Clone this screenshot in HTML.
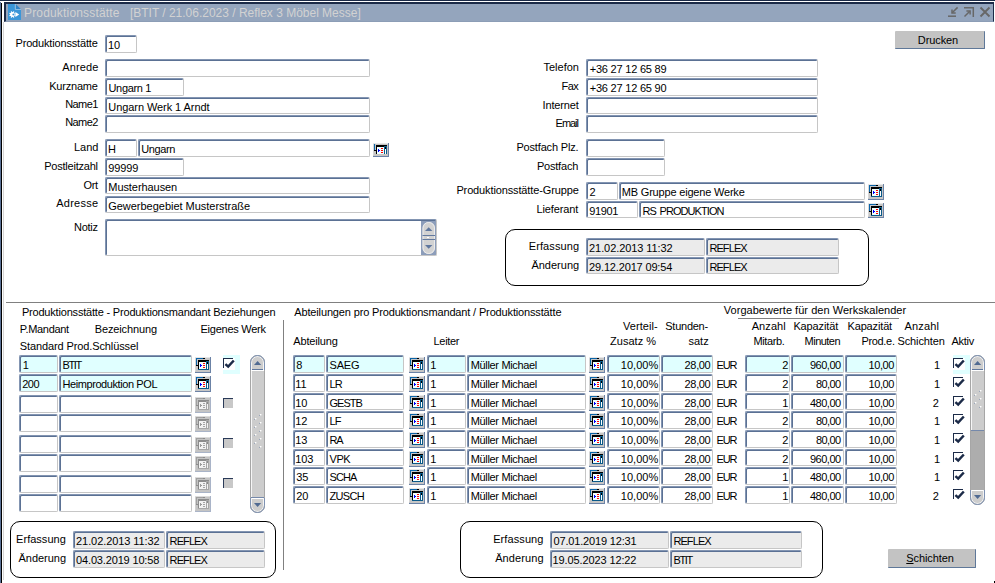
<!DOCTYPE html>
<html lang="de"><head><meta charset="utf-8"><title>Produktionsstätte</title>
<style>
html,body{margin:0;padding:0;background:#fff;}
body{width:995px;height:583px;position:relative;overflow:hidden;font-family:"Liberation Sans",Arial,sans-serif;font-size:11px;color:#000;}
.a{position:absolute}
#tb{position:absolute;left:4px;top:2px;width:990px;height:20px;background:#94a5bd;border-top:2px solid #1c2b48;border-left:2px solid #1c2b48;border-right:1px solid #1c2b48;border-bottom:1px solid #8c9db6;box-sizing:border-box}
#title{position:absolute;left:24px;top:4px;height:17px;line-height:18px;font-size:12px;color:#d2d2d2;white-space:pre;letter-spacing:0.1px}
.l{position:absolute;white-space:pre;line-height:12px;height:12px}
.f{position:absolute;box-sizing:border-box;background:#fff;border-style:solid;border-width:1px;border-color:#8395b2 #c6c6c6 #c6c6c6 #8395b2;box-shadow:inset 1px 1px 0 #5b7194;border-radius:2px;white-space:pre;overflow:hidden}
.f span{position:absolute;top:3px;line-height:13px}
.f.ro{background:#ebebeb}
.f.cur{background:#e0ffff}
.rb{position:absolute;box-sizing:border-box;border:1px solid #000;border-radius:10px}
.btn{position:absolute;box-sizing:border-box;background:#c3c3c3;border-right:1px solid #5f7899;border-bottom:1px solid #5f7899;border-radius:1px;text-align:center;line-height:19px;font-size:11px;letter-spacing:-0.1px;padding-right:3px}
</style></head>
<body>
<div class="a" style="left:0;top:0;width:995px;height:1px;background:#1c2b48"></div>
<div class="a" style="left:0;top:2px;width:1px;height:581px;background:#5a7196"></div>
<div class="a" style="left:1px;top:3px;width:1px;height:580px;background:#000"></div>
<div class="a" style="left:3px;top:22px;width:1px;height:558px;background:#d4d4d4"></div>
<div class="a" style="left:994px;top:581px;width:1px;height:2px;background:#000"></div>
<div id="tb"></div>
<div id="title"><span style="letter-spacing:0.17px">Produktionsstätte</span>&nbsp;&nbsp;&nbsp;<span style="letter-spacing:-0.01px">[BTIT / 21.06.2023 / Reflex 3 Möbel Messe]</span></div>
<svg class="a" style="left:8px;top:4px" width="14" height="17" viewBox="0 0 14 17"><path d="M0 0 H7 V5.2 H13 V16 H0 Z" fill="#3a96d8"/><path d="M7.6 0 L13 5.2 H7.6 Z" fill="#2f84c8"/><path d="M7.3 0 V5.5 H13" fill="none" stroke="#9cc8ea" stroke-width="0.8"/><path d="M6.08 11.11 L7.74 11.80 M5.21 11.98 L5.90 13.64 M3.99 11.98 L3.30 13.64 M3.12 11.11 L1.46 11.80 M3.12 9.89 L1.46 9.20 M3.99 9.02 L3.30 7.36 M5.21 9.02 L5.90 7.36 M6.08 9.89 L7.74 9.20" stroke="#fff" stroke-width="1.2" fill="none"/><circle cx="4.6" cy="10.5" r="2.4" fill="#fff"/><circle cx="5.3" cy="10.5" r="0.9" fill="#3a96d8"/><rect x="6.7" y="7" width="0.8" height="7" fill="#3a96d8"/><path d="M7.4 8 L11.2 10.5 L7.4 13 Z" fill="#fff"/></svg>
<svg class="a" style="left:946px;top:5px" width="46" height="14" viewBox="0 0 46 14"><g stroke="#676767" stroke-width="1.5" fill="none"><path d="M2 11.2 H10"/><path d="M11.6 2.4 L6.2 7.8"/><path d="M6 4.4 V8 H9.7"/><path d="M18 2.8 H27.3 V12"/><path d="M18.5 11.5 L23.8 6.2"/><path d="M20.4 5.9 H24.1 V9.6"/><path d="M34.5 2.5 L43.5 11.5 M43.5 2.5 L34.5 11.5" stroke-width="1.9"/></g></svg>
<div class="l" style="left:15.5px;top:37px;letter-spacing:-0.17px">Produktionsstätte</div>
<div class="f" style="left:105px;top:35px;width:32px;height:18px;"><span style="left:1.9px;letter-spacing:-0.10px">10</span></div>
<div class="l" style="left:62.3px;top:61px;letter-spacing:0.10px">Anrede</div>
<div class="f" style="left:105px;top:59px;width:265px;height:18px;"></div>
<div class="l" style="left:49.2px;top:80px;letter-spacing:-0.20px">Kurzname</div>
<div class="f" style="left:105px;top:78px;width:79px;height:18px;"><span style="left:2.5px;letter-spacing:-0.33px">Ungarn 1</span></div>
<div class="l" style="left:65.3px;top:98px;letter-spacing:-0.62px">Name1</div>
<div class="f" style="left:105px;top:97px;width:265px;height:17px;"><span style="left:2.3px;letter-spacing:-0.07px">Ungarn Werk 1 Arndt</span></div>
<div class="l" style="left:65.3px;top:116px;letter-spacing:-0.62px">Name2</div>
<div class="f" style="left:105px;top:115px;width:265px;height:18px;"></div>
<div class="l" style="left:74.1px;top:141px;letter-spacing:-0.10px">Land</div>
<div class="f" style="left:105px;top:139px;width:32px;height:18px;"><span style="left:2.0px;letter-spacing:-0.10px">H</span></div>
<div class="f" style="left:138px;top:139px;width:232px;height:18px;"><span style="left:2.2px;letter-spacing:-0.36px">Ungarn</span></div>
<svg class="a" style="left:373px;top:143px" width="16" height="14" viewBox="0 0 16 14" shape-rendering="crispEdges"><rect x="0" y="0" width="16" height="14" fill="#6b82a6"/><rect x="0" y="0" width="15" height="13" fill="#c6c6c6"/><rect x="0" y="0" width="15" height="1" fill="#e6e6e6"/><rect x="0" y="1" width="1" height="11" fill="#d6d6d6"/><rect x="1" y="1" width="1" height="6" fill="#0a64a8"/><rect x="1" y="7" width="3" height="1" fill="#000"/><rect x="3" y="2" width="11" height="1" fill="#000"/><rect x="3" y="3" width="1" height="8" fill="#000"/><rect x="4" y="3" width="7" height="1" fill="#000"/><rect x="11" y="3" width="3" height="1" fill="#0a5a8a"/><rect x="4" y="4" width="7" height="7" fill="#f0ffff"/><rect x="5" y="6" width="1" height="3" fill="#00f"/><rect x="6" y="7" width="1" height="1" fill="#00f"/><rect x="8" y="5" width="2" height="1" fill="#f00"/><rect x="8" y="7" width="2" height="1" fill="#f00"/><rect x="8" y="9" width="2" height="1" fill="#f00"/><rect x="11" y="4" width="1" height="7" fill="#0a5a8a"/><rect x="12" y="4" width="1" height="2" fill="#000"/><rect x="12" y="6" width="1" height="5" fill="#fff"/><rect x="13" y="4" width="1" height="7" fill="#0a5a8a"/></svg>
<div class="l" style="left:44.2px;top:160px;letter-spacing:-0.22px">Postleitzahl</div>
<div class="f" style="left:105px;top:158px;width:79px;height:18px;"><span style="left:2.3px;letter-spacing:-0.15px">99999</span></div>
<div class="l" style="left:83.4px;top:179px;letter-spacing:-0.30px">Ort</div>
<div class="f" style="left:105px;top:177px;width:265px;height:17px;"><span style="left:2.3px;letter-spacing:-0.07px">Musterhausen</span></div>
<div class="l" style="left:56.2px;top:197px;letter-spacing:0.27px">Adresse</div>
<div class="f" style="left:105px;top:196px;width:265px;height:17px;"><span style="left:2.2px;letter-spacing:-0.02px">Gewerbegebiet Musterstraße</span></div>
<div class="l" style="left:74.1px;top:221px;letter-spacing:-0.32px">Notiz</div>
<div class="f" style="left:105px;top:219px;width:332px;height:37px;"></div>
<svg class="a" style="left:421px;top:221px" width="15" height="34" viewBox="0 0 15 34"><rect x="0" y="0" width="15" height="34" fill="#8c9dba"/><rect x="1.5" y="1" width="12.5" height="32" rx="6" fill="#d2d2d2"/><rect x="2" y="1.5" width="11.5" height="31" rx="5.5" fill="none" stroke="#f2f2f2" stroke-opacity="0.8"/><path d="M4 10 L7.7 6.2 L11.4 10 Z" fill="#5f779e"/><path d="M4 24 L7.7 27.8 L11.4 24 Z" fill="#5f779e"/><rect x="1.5" y="14" width="12.5" height="1" fill="#62799f"/><rect x="1.5" y="18" width="12.5" height="1" fill="#62799f"/><rect x="6" y="16" width="2" height="1" fill="#fff"/></svg>
<div class="l" style="left:543.5px;top:61px;letter-spacing:0.00px">Telefon</div>
<div class="f" style="left:586px;top:59px;width:232px;height:18px;"><span style="left:2.7px;letter-spacing:-0.21px">+36 27 12 65 89</span></div>
<div class="l" style="left:561.6px;top:80px;letter-spacing:-0.55px">Fax</div>
<div class="f" style="left:586px;top:78px;width:232px;height:18px;"><span style="left:2.7px;letter-spacing:-0.21px">+36 27 12 65 90</span></div>
<div class="l" style="left:542.5px;top:99px;letter-spacing:-0.14px">Internet</div>
<div class="f" style="left:586px;top:97px;width:232px;height:17px;"></div>
<div class="l" style="left:555.6px;top:117px;letter-spacing:-1.03px">Email</div>
<div class="f" style="left:586px;top:115px;width:232px;height:18px;"></div>
<div class="l" style="left:516.4px;top:141px;letter-spacing:-0.16px">Postfach Plz.</div>
<div class="f" style="left:586px;top:139px;width:79px;height:18px;"></div>
<div class="l" style="left:536.9px;top:160px;letter-spacing:-0.20px">Postfach</div>
<div class="f" style="left:586px;top:158px;width:79px;height:18px;"></div>
<div class="l" style="left:456.4px;top:184px;letter-spacing:-0.13px">Produktionsstätte-Gruppe</div>
<div class="f" style="left:586px;top:182px;width:32px;height:18px;"><span style="left:2.5px;letter-spacing:-0.10px">2</span></div>
<div class="f" style="left:619px;top:182px;width:246px;height:18px;"><span style="left:1.8px;letter-spacing:-0.19px">MB Gruppe eigene Werke</span></div>
<svg class="a" style="left:868px;top:184px" width="16" height="16" viewBox="0 0 16 16" shape-rendering="crispEdges"><rect x="0" y="0" width="16" height="16" fill="#6b82a6"/><rect x="0" y="0" width="15" height="15" fill="#c6c6c6"/><rect x="0" y="0" width="15" height="1" fill="#e6e6e6"/><rect x="0" y="1" width="1" height="13" fill="#d6d6d6"/><rect x="1" y="1" width="8" height="1" fill="#0a64a8"/><rect x="8" y="1" width="2" height="1" fill="#000"/><rect x="1" y="1" width="1" height="7" fill="#0a64a8"/><rect x="1" y="8" width="3" height="1" fill="#000"/><rect x="3" y="3" width="11" height="1" fill="#000"/><rect x="3" y="4" width="1" height="8" fill="#000"/><rect x="4" y="4" width="7" height="1" fill="#000"/><rect x="11" y="4" width="3" height="1" fill="#0a5a8a"/><rect x="4" y="5" width="7" height="7" fill="#f0ffff"/><rect x="5" y="7" width="1" height="3" fill="#00f"/><rect x="6" y="8" width="1" height="1" fill="#00f"/><rect x="8" y="6" width="2" height="1" fill="#f00"/><rect x="8" y="8" width="2" height="1" fill="#f00"/><rect x="8" y="10" width="2" height="1" fill="#f00"/><rect x="11" y="5" width="1" height="7" fill="#0a5a8a"/><rect x="12" y="5" width="1" height="2" fill="#000"/><rect x="12" y="7" width="1" height="5" fill="#fff"/><rect x="13" y="5" width="1" height="7" fill="#0a5a8a"/><rect x="3" y="12" width="11" height="1" fill="#0a5a8a"/></svg>
<div class="l" style="left:536.4px;top:203px;letter-spacing:-0.11px">Lieferant</div>
<div class="f" style="left:586px;top:201px;width:52px;height:17px;"><span style="left:2.2px;letter-spacing:-0.33px">91901</span></div>
<div class="f" style="left:639px;top:201px;width:226px;height:17px;"><span style="left:2.4px;letter-spacing:-0.92px;word-spacing:1.5px">RS PRODUKTION</span></div>
<svg class="a" style="left:868px;top:203px" width="16" height="15" viewBox="0 0 16 15" shape-rendering="crispEdges"><rect x="0" y="0" width="16" height="15" fill="#6b82a6"/><rect x="0" y="0" width="15" height="14" fill="#c6c6c6"/><rect x="0" y="0" width="15" height="1" fill="#e6e6e6"/><rect x="0" y="1" width="1" height="12" fill="#d6d6d6"/><rect x="1" y="1" width="8" height="1" fill="#0a64a8"/><rect x="8" y="1" width="2" height="1" fill="#000"/><rect x="1" y="1" width="1" height="7" fill="#0a64a8"/><rect x="1" y="8" width="3" height="1" fill="#000"/><rect x="3" y="3" width="11" height="1" fill="#000"/><rect x="3" y="4" width="1" height="8" fill="#000"/><rect x="4" y="4" width="7" height="1" fill="#000"/><rect x="11" y="4" width="3" height="1" fill="#0a5a8a"/><rect x="4" y="5" width="7" height="7" fill="#f0ffff"/><rect x="5" y="7" width="1" height="3" fill="#00f"/><rect x="6" y="8" width="1" height="1" fill="#00f"/><rect x="8" y="6" width="2" height="1" fill="#f00"/><rect x="8" y="8" width="2" height="1" fill="#f00"/><rect x="8" y="10" width="2" height="1" fill="#f00"/><rect x="11" y="5" width="1" height="7" fill="#0a5a8a"/><rect x="12" y="5" width="1" height="2" fill="#000"/><rect x="12" y="7" width="1" height="5" fill="#fff"/><rect x="13" y="5" width="1" height="7" fill="#0a5a8a"/><rect x="3" y="12" width="11" height="1" fill="#0a5a8a"/></svg>
<div class="rb" style="left:505px;top:229px;width:364px;height:57px"></div>
<div class="l" style="left:528.8px;top:240px;letter-spacing:0.09px">Erfassung</div>
<div class="f ro" style="left:586px;top:238px;width:119px;height:18px;"><span style="left:2.1px;letter-spacing:-0.09px">21.02.2013 11:32</span></div>
<div class="f ro" style="left:706px;top:238px;width:133px;height:18px;"><span style="left:2.4px;letter-spacing:-0.90px">REFLEX</span></div>
<div class="l" style="left:531.4px;top:259px;letter-spacing:0.01px">Änderung</div>
<div class="f ro" style="left:586px;top:257px;width:119px;height:17px;"><span style="left:2.1px;letter-spacing:-0.16px">29.12.2017 09:54</span></div>
<div class="f ro" style="left:706px;top:257px;width:133px;height:17px;"><span style="left:2.4px;letter-spacing:-0.90px">REFLEX</span></div>
<div class="btn" style="left:895px;top:31px;width:90px;height:18px">Drucken</div>
<div class="a" style="left:6px;top:302px;width:989px;height:1px;background:#808080"></div>
<div class="a" style="left:283px;top:320px;width:1px;height:250px;background:#808080"></div>
<div class="l" style="left:21.9px;top:306px;letter-spacing:-0.19px">Produktionsstätte - Produktionsmandant Beziehungen</div>
<div class="l" style="left:19.8px;top:323px;letter-spacing:-0.30px">P.Mandant</div>
<div class="l" style="left:94.7px;top:323px;letter-spacing:-0.12px">Bezeichnung</div>
<div class="l" style="left:200.5px;top:323px;letter-spacing:-0.25px">Eigenes Werk</div>
<div class="l" style="left:19.8px;top:340px;letter-spacing:-0.11px">Standard Prod.Schlüssel</div>
<div class="f cur" style="left:19px;top:355px;width:39px;height:18px;"><span style="left:2.7px;letter-spacing:-0.10px">1</span></div>
<div class="f cur" style="left:59px;top:355px;width:133px;height:18px;"><span style="left:2.4px;letter-spacing:-1.30px">BTIT</span></div>
<svg class="a" style="left:195px;top:357px" width="16" height="16" viewBox="0 0 16 16" shape-rendering="crispEdges"><rect x="0" y="0" width="16" height="16" fill="#6b82a6"/><rect x="0" y="0" width="15" height="15" fill="#c6c6c6"/><rect x="0" y="0" width="15" height="1" fill="#e6e6e6"/><rect x="0" y="1" width="1" height="13" fill="#d6d6d6"/><rect x="1" y="1" width="8" height="1" fill="#0a64a8"/><rect x="8" y="1" width="2" height="1" fill="#000"/><rect x="1" y="1" width="1" height="7" fill="#0a64a8"/><rect x="1" y="8" width="3" height="1" fill="#000"/><rect x="3" y="3" width="11" height="1" fill="#000"/><rect x="3" y="4" width="1" height="8" fill="#000"/><rect x="4" y="4" width="7" height="1" fill="#000"/><rect x="11" y="4" width="3" height="1" fill="#0a5a8a"/><rect x="4" y="5" width="7" height="7" fill="#f0ffff"/><rect x="5" y="7" width="1" height="3" fill="#00f"/><rect x="6" y="8" width="1" height="1" fill="#00f"/><rect x="8" y="6" width="2" height="1" fill="#f00"/><rect x="8" y="8" width="2" height="1" fill="#f00"/><rect x="8" y="10" width="2" height="1" fill="#f00"/><rect x="11" y="5" width="1" height="7" fill="#0a5a8a"/><rect x="12" y="5" width="1" height="2" fill="#000"/><rect x="12" y="7" width="1" height="5" fill="#fff"/><rect x="13" y="5" width="1" height="7" fill="#0a5a8a"/><rect x="3" y="12" width="11" height="1" fill="#0a5a8a"/></svg>
<div class="a" style="left:223px;top:355px;width:17px;height:19px;background:#e0ffff"></div>
<svg class="a" style="left:223px;top:358px" width="12" height="12" viewBox="0 0 12 12"><rect x="0" y="0" width="12" height="12" fill="#fff"/><rect x="0" y="0" width="10" height="1" fill="#1c2b48"/><rect x="0" y="0" width="1" height="10" fill="#1c2b48"/><path d="M2.4 6.1 L5.2 8.6 L10.8 2.5" fill="none" stroke="#1c2b48" stroke-width="2.5"/></svg>
<div class="f cur" style="left:19px;top:374px;width:39px;height:18px;"><span style="left:2.2px;letter-spacing:-0.45px">200</span></div>
<div class="f cur" style="left:59px;top:374px;width:133px;height:18px;"><span style="left:2.4px;letter-spacing:-0.41px">Heimproduktion POL</span></div>
<svg class="a" style="left:195px;top:376px" width="16" height="16" viewBox="0 0 16 16" shape-rendering="crispEdges"><rect x="0" y="0" width="16" height="16" fill="#6b82a6"/><rect x="0" y="0" width="15" height="15" fill="#c6c6c6"/><rect x="0" y="0" width="15" height="1" fill="#e6e6e6"/><rect x="0" y="1" width="1" height="13" fill="#d6d6d6"/><rect x="1" y="1" width="8" height="1" fill="#0a64a8"/><rect x="8" y="1" width="2" height="1" fill="#000"/><rect x="1" y="1" width="1" height="7" fill="#0a64a8"/><rect x="1" y="8" width="3" height="1" fill="#000"/><rect x="3" y="3" width="11" height="1" fill="#000"/><rect x="3" y="4" width="1" height="8" fill="#000"/><rect x="4" y="4" width="7" height="1" fill="#000"/><rect x="11" y="4" width="3" height="1" fill="#0a5a8a"/><rect x="4" y="5" width="7" height="7" fill="#f0ffff"/><rect x="5" y="7" width="1" height="3" fill="#00f"/><rect x="6" y="8" width="1" height="1" fill="#00f"/><rect x="8" y="6" width="2" height="1" fill="#f00"/><rect x="8" y="8" width="2" height="1" fill="#f00"/><rect x="8" y="10" width="2" height="1" fill="#f00"/><rect x="11" y="5" width="1" height="7" fill="#0a5a8a"/><rect x="12" y="5" width="1" height="2" fill="#000"/><rect x="12" y="7" width="1" height="5" fill="#fff"/><rect x="13" y="5" width="1" height="7" fill="#0a5a8a"/><rect x="3" y="12" width="11" height="1" fill="#0a5a8a"/></svg>
<div class="f" style="left:19px;top:395px;width:39px;height:18px;"></div>
<div class="f" style="left:59px;top:395px;width:133px;height:18px;"></div>
<svg class="a" style="left:195px;top:397px" width="16" height="16" viewBox="0 0 16 16" shape-rendering="crispEdges"><rect x="0" y="0" width="16" height="16" fill="#a9b4c8"/><rect x="0" y="0" width="15" height="15" fill="#c4c4c4"/><rect x="0" y="0" width="15" height="1" fill="#dcdcdc"/><rect x="0" y="1" width="1" height="13" fill="#d0d0d0"/><rect x="1" y="1" width="8" height="1" fill="#a0a0a0"/><rect x="8" y="1" width="2" height="1" fill="#8c8c8c"/><rect x="1" y="1" width="1" height="7" fill="#a0a0a0"/><rect x="1" y="8" width="3" height="1" fill="#8c8c8c"/><rect x="3" y="3" width="11" height="1" fill="#8c8c8c"/><rect x="3" y="4" width="1" height="8" fill="#8c8c8c"/><rect x="4" y="4" width="7" height="1" fill="#8c8c8c"/><rect x="11" y="4" width="3" height="1" fill="#a6a6a6"/><rect x="4" y="5" width="7" height="7" fill="#f2f2f2"/><rect x="5" y="7" width="1" height="3" fill="#9a9a9a"/><rect x="6" y="8" width="1" height="1" fill="#9a9a9a"/><rect x="8" y="6" width="2" height="1" fill="#a4a4a4"/><rect x="8" y="8" width="2" height="1" fill="#a4a4a4"/><rect x="8" y="10" width="2" height="1" fill="#a4a4a4"/><rect x="11" y="5" width="1" height="7" fill="#a6a6a6"/><rect x="12" y="5" width="1" height="2" fill="#8c8c8c"/><rect x="12" y="7" width="1" height="5" fill="#f2f2f2"/><rect x="13" y="5" width="1" height="7" fill="#a6a6a6"/><rect x="3" y="12" width="11" height="1" fill="#a6a6a6"/></svg>
<svg class="a" style="left:223px;top:398px" width="11" height="11" viewBox="0 0 11 11" shape-rendering="crispEdges"><rect x="0" y="0" width="11" height="11" fill="#fff"/><rect x="0" y="0" width="10" height="10" fill="#c8c8c8"/><rect x="0" y="0" width="10" height="1" fill="#2a3a58"/><rect x="0" y="0" width="1" height="10" fill="#2a3a58"/></svg>
<div class="f" style="left:19px;top:414px;width:39px;height:18px;"></div>
<div class="f" style="left:59px;top:414px;width:133px;height:18px;"></div>
<svg class="a" style="left:195px;top:416px" width="16" height="16" viewBox="0 0 16 16" shape-rendering="crispEdges"><rect x="0" y="0" width="16" height="16" fill="#a9b4c8"/><rect x="0" y="0" width="15" height="15" fill="#c4c4c4"/><rect x="0" y="0" width="15" height="1" fill="#dcdcdc"/><rect x="0" y="1" width="1" height="13" fill="#d0d0d0"/><rect x="1" y="1" width="8" height="1" fill="#a0a0a0"/><rect x="8" y="1" width="2" height="1" fill="#8c8c8c"/><rect x="1" y="1" width="1" height="7" fill="#a0a0a0"/><rect x="1" y="8" width="3" height="1" fill="#8c8c8c"/><rect x="3" y="3" width="11" height="1" fill="#8c8c8c"/><rect x="3" y="4" width="1" height="8" fill="#8c8c8c"/><rect x="4" y="4" width="7" height="1" fill="#8c8c8c"/><rect x="11" y="4" width="3" height="1" fill="#a6a6a6"/><rect x="4" y="5" width="7" height="7" fill="#f2f2f2"/><rect x="5" y="7" width="1" height="3" fill="#9a9a9a"/><rect x="6" y="8" width="1" height="1" fill="#9a9a9a"/><rect x="8" y="6" width="2" height="1" fill="#a4a4a4"/><rect x="8" y="8" width="2" height="1" fill="#a4a4a4"/><rect x="8" y="10" width="2" height="1" fill="#a4a4a4"/><rect x="11" y="5" width="1" height="7" fill="#a6a6a6"/><rect x="12" y="5" width="1" height="2" fill="#8c8c8c"/><rect x="12" y="7" width="1" height="5" fill="#f2f2f2"/><rect x="13" y="5" width="1" height="7" fill="#a6a6a6"/><rect x="3" y="12" width="11" height="1" fill="#a6a6a6"/></svg>
<div class="f" style="left:19px;top:435px;width:39px;height:18px;"></div>
<div class="f" style="left:59px;top:435px;width:133px;height:18px;"></div>
<svg class="a" style="left:195px;top:437px" width="16" height="16" viewBox="0 0 16 16" shape-rendering="crispEdges"><rect x="0" y="0" width="16" height="16" fill="#a9b4c8"/><rect x="0" y="0" width="15" height="15" fill="#c4c4c4"/><rect x="0" y="0" width="15" height="1" fill="#dcdcdc"/><rect x="0" y="1" width="1" height="13" fill="#d0d0d0"/><rect x="1" y="1" width="8" height="1" fill="#a0a0a0"/><rect x="8" y="1" width="2" height="1" fill="#8c8c8c"/><rect x="1" y="1" width="1" height="7" fill="#a0a0a0"/><rect x="1" y="8" width="3" height="1" fill="#8c8c8c"/><rect x="3" y="3" width="11" height="1" fill="#8c8c8c"/><rect x="3" y="4" width="1" height="8" fill="#8c8c8c"/><rect x="4" y="4" width="7" height="1" fill="#8c8c8c"/><rect x="11" y="4" width="3" height="1" fill="#a6a6a6"/><rect x="4" y="5" width="7" height="7" fill="#f2f2f2"/><rect x="5" y="7" width="1" height="3" fill="#9a9a9a"/><rect x="6" y="8" width="1" height="1" fill="#9a9a9a"/><rect x="8" y="6" width="2" height="1" fill="#a4a4a4"/><rect x="8" y="8" width="2" height="1" fill="#a4a4a4"/><rect x="8" y="10" width="2" height="1" fill="#a4a4a4"/><rect x="11" y="5" width="1" height="7" fill="#a6a6a6"/><rect x="12" y="5" width="1" height="2" fill="#8c8c8c"/><rect x="12" y="7" width="1" height="5" fill="#f2f2f2"/><rect x="13" y="5" width="1" height="7" fill="#a6a6a6"/><rect x="3" y="12" width="11" height="1" fill="#a6a6a6"/></svg>
<svg class="a" style="left:223px;top:438px" width="11" height="11" viewBox="0 0 11 11" shape-rendering="crispEdges"><rect x="0" y="0" width="11" height="11" fill="#fff"/><rect x="0" y="0" width="10" height="10" fill="#c8c8c8"/><rect x="0" y="0" width="10" height="1" fill="#2a3a58"/><rect x="0" y="0" width="1" height="10" fill="#2a3a58"/></svg>
<div class="f" style="left:19px;top:454px;width:39px;height:18px;"></div>
<div class="f" style="left:59px;top:454px;width:133px;height:18px;"></div>
<svg class="a" style="left:195px;top:456px" width="16" height="16" viewBox="0 0 16 16" shape-rendering="crispEdges"><rect x="0" y="0" width="16" height="16" fill="#a9b4c8"/><rect x="0" y="0" width="15" height="15" fill="#c4c4c4"/><rect x="0" y="0" width="15" height="1" fill="#dcdcdc"/><rect x="0" y="1" width="1" height="13" fill="#d0d0d0"/><rect x="1" y="1" width="8" height="1" fill="#a0a0a0"/><rect x="8" y="1" width="2" height="1" fill="#8c8c8c"/><rect x="1" y="1" width="1" height="7" fill="#a0a0a0"/><rect x="1" y="8" width="3" height="1" fill="#8c8c8c"/><rect x="3" y="3" width="11" height="1" fill="#8c8c8c"/><rect x="3" y="4" width="1" height="8" fill="#8c8c8c"/><rect x="4" y="4" width="7" height="1" fill="#8c8c8c"/><rect x="11" y="4" width="3" height="1" fill="#a6a6a6"/><rect x="4" y="5" width="7" height="7" fill="#f2f2f2"/><rect x="5" y="7" width="1" height="3" fill="#9a9a9a"/><rect x="6" y="8" width="1" height="1" fill="#9a9a9a"/><rect x="8" y="6" width="2" height="1" fill="#a4a4a4"/><rect x="8" y="8" width="2" height="1" fill="#a4a4a4"/><rect x="8" y="10" width="2" height="1" fill="#a4a4a4"/><rect x="11" y="5" width="1" height="7" fill="#a6a6a6"/><rect x="12" y="5" width="1" height="2" fill="#8c8c8c"/><rect x="12" y="7" width="1" height="5" fill="#f2f2f2"/><rect x="13" y="5" width="1" height="7" fill="#a6a6a6"/><rect x="3" y="12" width="11" height="1" fill="#a6a6a6"/></svg>
<div class="f" style="left:19px;top:475px;width:39px;height:18px;"></div>
<div class="f" style="left:59px;top:475px;width:133px;height:18px;"></div>
<svg class="a" style="left:195px;top:477px" width="16" height="16" viewBox="0 0 16 16" shape-rendering="crispEdges"><rect x="0" y="0" width="16" height="16" fill="#a9b4c8"/><rect x="0" y="0" width="15" height="15" fill="#c4c4c4"/><rect x="0" y="0" width="15" height="1" fill="#dcdcdc"/><rect x="0" y="1" width="1" height="13" fill="#d0d0d0"/><rect x="1" y="1" width="8" height="1" fill="#a0a0a0"/><rect x="8" y="1" width="2" height="1" fill="#8c8c8c"/><rect x="1" y="1" width="1" height="7" fill="#a0a0a0"/><rect x="1" y="8" width="3" height="1" fill="#8c8c8c"/><rect x="3" y="3" width="11" height="1" fill="#8c8c8c"/><rect x="3" y="4" width="1" height="8" fill="#8c8c8c"/><rect x="4" y="4" width="7" height="1" fill="#8c8c8c"/><rect x="11" y="4" width="3" height="1" fill="#a6a6a6"/><rect x="4" y="5" width="7" height="7" fill="#f2f2f2"/><rect x="5" y="7" width="1" height="3" fill="#9a9a9a"/><rect x="6" y="8" width="1" height="1" fill="#9a9a9a"/><rect x="8" y="6" width="2" height="1" fill="#a4a4a4"/><rect x="8" y="8" width="2" height="1" fill="#a4a4a4"/><rect x="8" y="10" width="2" height="1" fill="#a4a4a4"/><rect x="11" y="5" width="1" height="7" fill="#a6a6a6"/><rect x="12" y="5" width="1" height="2" fill="#8c8c8c"/><rect x="12" y="7" width="1" height="5" fill="#f2f2f2"/><rect x="13" y="5" width="1" height="7" fill="#a6a6a6"/><rect x="3" y="12" width="11" height="1" fill="#a6a6a6"/></svg>
<svg class="a" style="left:223px;top:478px" width="11" height="11" viewBox="0 0 11 11" shape-rendering="crispEdges"><rect x="0" y="0" width="11" height="11" fill="#fff"/><rect x="0" y="0" width="10" height="10" fill="#c8c8c8"/><rect x="0" y="0" width="10" height="1" fill="#2a3a58"/><rect x="0" y="0" width="1" height="10" fill="#2a3a58"/></svg>
<div class="f" style="left:19px;top:494px;width:39px;height:18px;"></div>
<div class="f" style="left:59px;top:494px;width:133px;height:18px;"></div>
<svg class="a" style="left:195px;top:496px" width="16" height="16" viewBox="0 0 16 16" shape-rendering="crispEdges"><rect x="0" y="0" width="16" height="16" fill="#a9b4c8"/><rect x="0" y="0" width="15" height="15" fill="#c4c4c4"/><rect x="0" y="0" width="15" height="1" fill="#dcdcdc"/><rect x="0" y="1" width="1" height="13" fill="#d0d0d0"/><rect x="1" y="1" width="8" height="1" fill="#a0a0a0"/><rect x="8" y="1" width="2" height="1" fill="#8c8c8c"/><rect x="1" y="1" width="1" height="7" fill="#a0a0a0"/><rect x="1" y="8" width="3" height="1" fill="#8c8c8c"/><rect x="3" y="3" width="11" height="1" fill="#8c8c8c"/><rect x="3" y="4" width="1" height="8" fill="#8c8c8c"/><rect x="4" y="4" width="7" height="1" fill="#8c8c8c"/><rect x="11" y="4" width="3" height="1" fill="#a6a6a6"/><rect x="4" y="5" width="7" height="7" fill="#f2f2f2"/><rect x="5" y="7" width="1" height="3" fill="#9a9a9a"/><rect x="6" y="8" width="1" height="1" fill="#9a9a9a"/><rect x="8" y="6" width="2" height="1" fill="#a4a4a4"/><rect x="8" y="8" width="2" height="1" fill="#a4a4a4"/><rect x="8" y="10" width="2" height="1" fill="#a4a4a4"/><rect x="11" y="5" width="1" height="7" fill="#a6a6a6"/><rect x="12" y="5" width="1" height="2" fill="#8c8c8c"/><rect x="12" y="7" width="1" height="5" fill="#f2f2f2"/><rect x="13" y="5" width="1" height="7" fill="#a6a6a6"/><rect x="3" y="12" width="11" height="1" fill="#a6a6a6"/></svg>
<svg class="a" style="left:250px;top:355px" width="15" height="158" viewBox="0 0 15 158"><clipPath id="sbc1"><rect x="0" y="0" width="15" height="158" rx="7.5" ry="7.5"/></clipPath><clipPath id="sbc1e"><rect x="0" y="0" width="15" height="15"/><rect x="0" y="143" width="15" height="15"/></clipPath><g clip-path="url(#sbc1)"><rect x="0" y="0" width="15" height="158" fill="#cdcdcd"/><rect x="1" y="16" width="1" height="126" fill="#f6f6f6"/><rect x="0" y="142" width="15" height="1" fill="#7589ab"/><rect x="1" y="143" width="13" height="1" fill="#fff"/><rect x="0" y="14" width="15" height="1" fill="#5f779e"/><rect x="1" y="15" width="13" height="1" fill="#fff"/></g><rect x="0.5" y="0.5" width="14" height="157" rx="7" ry="7" fill="none" stroke="#a6a6a6"/><g clip-path="url(#sbc1e)"><rect x="1.5" y="1.5" width="12" height="155" rx="6" ry="6" fill="none" stroke="#f4f4f4"/><rect x="0.5" y="0.5" width="14" height="157" rx="7" ry="7" fill="none" stroke="#7e92b3"/></g><path d="M4 10 L7.6 6 L11.2 10 Z" fill="#506a92"/><path d="M4 148 L7.6 152 L11.2 148 Z" fill="#506a92"/><rect x="10" y="59" width="1.4" height="1.4" fill="#fff"/><rect x="9" y="60" width="1" height="1" fill="#9aa6ba"/><rect x="5" y="63" width="1.4" height="1.4" fill="#fff"/><rect x="4" y="64" width="1" height="1" fill="#9aa6ba"/><rect x="10" y="67" width="1.4" height="1.4" fill="#fff"/><rect x="9" y="68" width="1" height="1" fill="#9aa6ba"/><rect x="5" y="71" width="1.4" height="1.4" fill="#fff"/><rect x="4" y="72" width="1" height="1" fill="#9aa6ba"/><rect x="10" y="75" width="1.4" height="1.4" fill="#fff"/><rect x="9" y="76" width="1" height="1" fill="#9aa6ba"/><rect x="5" y="79" width="1.4" height="1.4" fill="#fff"/><rect x="4" y="80" width="1" height="1" fill="#9aa6ba"/><rect x="10" y="83" width="1.4" height="1.4" fill="#fff"/><rect x="9" y="84" width="1" height="1" fill="#9aa6ba"/><rect x="5" y="87" width="1.4" height="1.4" fill="#fff"/><rect x="4" y="88" width="1" height="1" fill="#9aa6ba"/><rect x="10" y="91" width="1.4" height="1.4" fill="#fff"/><rect x="9" y="92" width="1" height="1" fill="#9aa6ba"/></svg>
<div class="rb" style="left:10px;top:521px;width:266px;height:57px"></div>
<div class="l" style="left:16.1px;top:533px;letter-spacing:0.02px">Erfassung</div>
<div class="f ro" style="left:73px;top:531px;width:92px;height:18px;"><span style="left:2.1px;letter-spacing:-0.09px">21.02.2013 11:32</span></div>
<div class="f ro" style="left:166px;top:531px;width:99px;height:18px;"><span style="left:2.6px;letter-spacing:-0.90px">REFLEX</span></div>
<div class="l" style="left:18.5px;top:552px;letter-spacing:-0.03px">Änderung</div>
<div class="f ro" style="left:73px;top:550px;width:92px;height:18px;"><span style="left:2.1px;letter-spacing:-0.16px">04.03.2019 10:58</span></div>
<div class="f ro" style="left:166px;top:550px;width:99px;height:18px;"><span style="left:2.6px;letter-spacing:-0.90px">REFLEX</span></div>
<div class="l" style="left:294.3px;top:306px;letter-spacing:-0.15px">Abteilungen pro Produktionsmandant / Produktionsstätte</div>
<div class="l" style="left:723.8px;top:304px;letter-spacing:0.03px">Vorgabewerte für den Werkskalender</div>
<div class="a" style="left:738px;top:318px;width:161px;height:1px;background:#808080"></div>
<div class="l" style="left:293.3px;top:335px;letter-spacing:-0.16px">Abteilung</div>
<div class="l" style="left:433.6px;top:335px;letter-spacing:-0.34px">Leiter</div>
<div class="l" style="left:623.1px;top:320px;letter-spacing:0.03px">Verteil-</div>
<div class="l" style="left:610.0px;top:335px;letter-spacing:0.04px">Zusatz %</div>
<div class="l" style="left:665.3px;top:320px;letter-spacing:-0.26px">Stunden-</div>
<div class="l" style="left:688.4px;top:335px;letter-spacing:0.03px">satz</div>
<div class="l" style="left:751.7px;top:320px;letter-spacing:0.08px">Anzahl</div>
<div class="l" style="left:753.5px;top:335px;letter-spacing:-0.38px">Mitarb.</div>
<div class="l" style="left:793.4px;top:320px;letter-spacing:-0.12px">Kapazität</div>
<div class="l" style="left:804.6px;top:335px;letter-spacing:-0.53px">Minuten</div>
<div class="l" style="left:847.5px;top:320px;letter-spacing:-0.15px">Kapazität</div>
<div class="l" style="left:861.4px;top:335px;letter-spacing:-0.32px">Prod.e.</div>
<div class="l" style="left:904.4px;top:320px;letter-spacing:0.18px">Anzahl</div>
<div class="l" style="left:897.5px;top:335px;letter-spacing:-0.12px">Schichten</div>
<div class="l" style="left:951.4px;top:335px;letter-spacing:-0.22px">Aktiv</div>
<div class="f cur" style="left:293px;top:355px;width:32px;height:18px;"><span style="left:2.2px;letter-spacing:-0.10px">8</span></div>
<div class="f cur" style="left:326px;top:355px;width:78px;height:18px;"><span style="left:2.6px;letter-spacing:-0.23px">SAEG</span></div>
<svg class="a" style="left:409px;top:357px" width="16" height="16" viewBox="0 0 16 16" shape-rendering="crispEdges"><rect x="0" y="0" width="16" height="16" fill="#6b82a6"/><rect x="0" y="0" width="15" height="15" fill="#c6c6c6"/><rect x="0" y="0" width="15" height="1" fill="#e6e6e6"/><rect x="0" y="1" width="1" height="13" fill="#d6d6d6"/><rect x="1" y="1" width="8" height="1" fill="#0a64a8"/><rect x="8" y="1" width="2" height="1" fill="#000"/><rect x="1" y="1" width="1" height="7" fill="#0a64a8"/><rect x="1" y="8" width="3" height="1" fill="#000"/><rect x="3" y="3" width="11" height="1" fill="#000"/><rect x="3" y="4" width="1" height="8" fill="#000"/><rect x="4" y="4" width="7" height="1" fill="#000"/><rect x="11" y="4" width="3" height="1" fill="#0a5a8a"/><rect x="4" y="5" width="7" height="7" fill="#f0ffff"/><rect x="5" y="7" width="1" height="3" fill="#00f"/><rect x="6" y="8" width="1" height="1" fill="#00f"/><rect x="8" y="6" width="2" height="1" fill="#f00"/><rect x="8" y="8" width="2" height="1" fill="#f00"/><rect x="8" y="10" width="2" height="1" fill="#f00"/><rect x="11" y="5" width="1" height="7" fill="#0a5a8a"/><rect x="12" y="5" width="1" height="2" fill="#000"/><rect x="12" y="7" width="1" height="5" fill="#fff"/><rect x="13" y="5" width="1" height="7" fill="#0a5a8a"/><rect x="3" y="12" width="11" height="1" fill="#0a5a8a"/></svg>
<div class="f cur" style="left:427px;top:355px;width:39px;height:18px;"><span style="left:2.2px;letter-spacing:-0.10px">1</span></div>
<div class="f cur" style="left:467px;top:355px;width:119px;height:18px;"><span style="left:2.7px;letter-spacing:-0.33px">Müller Michael</span></div>
<svg class="a" style="left:589px;top:357px" width="16" height="16" viewBox="0 0 16 16" shape-rendering="crispEdges"><rect x="0" y="0" width="16" height="16" fill="#6b82a6"/><rect x="0" y="0" width="15" height="15" fill="#c6c6c6"/><rect x="0" y="0" width="15" height="1" fill="#e6e6e6"/><rect x="0" y="1" width="1" height="13" fill="#d6d6d6"/><rect x="1" y="1" width="8" height="1" fill="#0a64a8"/><rect x="8" y="1" width="2" height="1" fill="#000"/><rect x="1" y="1" width="1" height="7" fill="#0a64a8"/><rect x="1" y="8" width="3" height="1" fill="#000"/><rect x="3" y="3" width="11" height="1" fill="#000"/><rect x="3" y="4" width="1" height="8" fill="#000"/><rect x="4" y="4" width="7" height="1" fill="#000"/><rect x="11" y="4" width="3" height="1" fill="#0a5a8a"/><rect x="4" y="5" width="7" height="7" fill="#f0ffff"/><rect x="5" y="7" width="1" height="3" fill="#00f"/><rect x="6" y="8" width="1" height="1" fill="#00f"/><rect x="8" y="6" width="2" height="1" fill="#f00"/><rect x="8" y="8" width="2" height="1" fill="#f00"/><rect x="8" y="10" width="2" height="1" fill="#f00"/><rect x="11" y="5" width="1" height="7" fill="#0a5a8a"/><rect x="12" y="5" width="1" height="2" fill="#000"/><rect x="12" y="7" width="1" height="5" fill="#fff"/><rect x="13" y="5" width="1" height="7" fill="#0a5a8a"/><rect x="3" y="12" width="11" height="1" fill="#0a5a8a"/></svg>
<div class="f cur" style="left:607px;top:355px;width:53px;height:18px;"><span style="left:12.8px;letter-spacing:0.02px">10,00%</span></div>
<div class="f cur" style="left:661px;top:355px;width:52px;height:18px;"><span style="left:22.6px;letter-spacing:-0.35px">28,00</span></div>
<div class="l" style="left:716.6px;top:359px;letter-spacing:-1.20px">EUR</div>
<div class="f cur" style="left:745px;top:355px;width:45px;height:18px;"><span style="left:36.3px;letter-spacing:-0.10px">2</span></div>
<div class="f cur" style="left:791px;top:355px;width:53px;height:18px;"><span style="left:17.9px;letter-spacing:-0.48px">960,00</span></div>
<div class="f cur" style="left:845px;top:355px;width:52px;height:18px;"><span style="left:22.5px;letter-spacing:-0.42px">10,00</span></div>
<div class="l" style="left:933.9px;top:359px;letter-spacing:-1.10px">1</div>
<div class="a" style="left:953px;top:355px;width:17px;height:19px;background:#e0ffff"></div>
<svg class="a" style="left:953px;top:358px" width="12" height="12" viewBox="0 0 12 12"><rect x="0" y="0" width="12" height="12" fill="#fff"/><rect x="0" y="0" width="10" height="1" fill="#1c2b48"/><rect x="0" y="0" width="1" height="10" fill="#1c2b48"/><path d="M2.4 6.1 L5.2 8.6 L10.8 2.5" fill="none" stroke="#1c2b48" stroke-width="2.5"/></svg>
<div class="f" style="left:293px;top:374px;width:32px;height:18px;"><span style="left:1.2px;letter-spacing:-0.10px">11</span></div>
<div class="f" style="left:326px;top:374px;width:78px;height:18px;"><span style="left:2.6px;letter-spacing:-1.00px">LR</span></div>
<svg class="a" style="left:409px;top:376px" width="16" height="16" viewBox="0 0 16 16" shape-rendering="crispEdges"><rect x="0" y="0" width="16" height="16" fill="#6b82a6"/><rect x="0" y="0" width="15" height="15" fill="#c6c6c6"/><rect x="0" y="0" width="15" height="1" fill="#e6e6e6"/><rect x="0" y="1" width="1" height="13" fill="#d6d6d6"/><rect x="1" y="1" width="8" height="1" fill="#0a64a8"/><rect x="8" y="1" width="2" height="1" fill="#000"/><rect x="1" y="1" width="1" height="7" fill="#0a64a8"/><rect x="1" y="8" width="3" height="1" fill="#000"/><rect x="3" y="3" width="11" height="1" fill="#000"/><rect x="3" y="4" width="1" height="8" fill="#000"/><rect x="4" y="4" width="7" height="1" fill="#000"/><rect x="11" y="4" width="3" height="1" fill="#0a5a8a"/><rect x="4" y="5" width="7" height="7" fill="#f0ffff"/><rect x="5" y="7" width="1" height="3" fill="#00f"/><rect x="6" y="8" width="1" height="1" fill="#00f"/><rect x="8" y="6" width="2" height="1" fill="#f00"/><rect x="8" y="8" width="2" height="1" fill="#f00"/><rect x="8" y="10" width="2" height="1" fill="#f00"/><rect x="11" y="5" width="1" height="7" fill="#0a5a8a"/><rect x="12" y="5" width="1" height="2" fill="#000"/><rect x="12" y="7" width="1" height="5" fill="#fff"/><rect x="13" y="5" width="1" height="7" fill="#0a5a8a"/><rect x="3" y="12" width="11" height="1" fill="#0a5a8a"/></svg>
<div class="f" style="left:427px;top:374px;width:39px;height:18px;"><span style="left:2.2px;letter-spacing:-0.10px">1</span></div>
<div class="f" style="left:467px;top:374px;width:119px;height:18px;"><span style="left:2.7px;letter-spacing:-0.33px">Müller Michael</span></div>
<svg class="a" style="left:589px;top:376px" width="16" height="16" viewBox="0 0 16 16" shape-rendering="crispEdges"><rect x="0" y="0" width="16" height="16" fill="#6b82a6"/><rect x="0" y="0" width="15" height="15" fill="#c6c6c6"/><rect x="0" y="0" width="15" height="1" fill="#e6e6e6"/><rect x="0" y="1" width="1" height="13" fill="#d6d6d6"/><rect x="1" y="1" width="8" height="1" fill="#0a64a8"/><rect x="8" y="1" width="2" height="1" fill="#000"/><rect x="1" y="1" width="1" height="7" fill="#0a64a8"/><rect x="1" y="8" width="3" height="1" fill="#000"/><rect x="3" y="3" width="11" height="1" fill="#000"/><rect x="3" y="4" width="1" height="8" fill="#000"/><rect x="4" y="4" width="7" height="1" fill="#000"/><rect x="11" y="4" width="3" height="1" fill="#0a5a8a"/><rect x="4" y="5" width="7" height="7" fill="#f0ffff"/><rect x="5" y="7" width="1" height="3" fill="#00f"/><rect x="6" y="8" width="1" height="1" fill="#00f"/><rect x="8" y="6" width="2" height="1" fill="#f00"/><rect x="8" y="8" width="2" height="1" fill="#f00"/><rect x="8" y="10" width="2" height="1" fill="#f00"/><rect x="11" y="5" width="1" height="7" fill="#0a5a8a"/><rect x="12" y="5" width="1" height="2" fill="#000"/><rect x="12" y="7" width="1" height="5" fill="#fff"/><rect x="13" y="5" width="1" height="7" fill="#0a5a8a"/><rect x="3" y="12" width="11" height="1" fill="#0a5a8a"/></svg>
<div class="f" style="left:607px;top:374px;width:53px;height:18px;"><span style="left:12.8px;letter-spacing:0.02px">10,00%</span></div>
<div class="f" style="left:661px;top:374px;width:52px;height:18px;"><span style="left:22.6px;letter-spacing:-0.35px">28,00</span></div>
<div class="l" style="left:716.6px;top:378px;letter-spacing:-1.20px">EUR</div>
<div class="f" style="left:745px;top:374px;width:45px;height:18px;"><span style="left:36.3px;letter-spacing:-0.10px">2</span></div>
<div class="f" style="left:791px;top:374px;width:53px;height:18px;"><span style="left:24.1px;letter-spacing:-0.65px">80,00</span></div>
<div class="f" style="left:845px;top:374px;width:52px;height:18px;"><span style="left:22.5px;letter-spacing:-0.42px">10,00</span></div>
<div class="l" style="left:933.9px;top:378px;letter-spacing:-1.10px">1</div>
<svg class="a" style="left:953px;top:377px" width="12" height="12" viewBox="0 0 12 12"><rect x="0" y="0" width="12" height="12" fill="#fff"/><rect x="0" y="0" width="10" height="1" fill="#1c2b48"/><rect x="0" y="0" width="1" height="10" fill="#1c2b48"/><path d="M2.4 6.1 L5.2 8.6 L10.8 2.5" fill="none" stroke="#1c2b48" stroke-width="2.5"/></svg>
<div class="f" style="left:293px;top:393px;width:32px;height:17px;"><span style="left:1.2px;letter-spacing:-0.10px">10</span></div>
<div class="f" style="left:326px;top:393px;width:78px;height:17px;"><span style="left:2.6px;letter-spacing:-1.03px">GESTB</span></div>
<svg class="a" style="left:409px;top:395px" width="16" height="16" viewBox="0 0 16 16" shape-rendering="crispEdges"><rect x="0" y="0" width="16" height="16" fill="#6b82a6"/><rect x="0" y="0" width="15" height="15" fill="#c6c6c6"/><rect x="0" y="0" width="15" height="1" fill="#e6e6e6"/><rect x="0" y="1" width="1" height="13" fill="#d6d6d6"/><rect x="1" y="1" width="8" height="1" fill="#0a64a8"/><rect x="8" y="1" width="2" height="1" fill="#000"/><rect x="1" y="1" width="1" height="7" fill="#0a64a8"/><rect x="1" y="8" width="3" height="1" fill="#000"/><rect x="3" y="3" width="11" height="1" fill="#000"/><rect x="3" y="4" width="1" height="8" fill="#000"/><rect x="4" y="4" width="7" height="1" fill="#000"/><rect x="11" y="4" width="3" height="1" fill="#0a5a8a"/><rect x="4" y="5" width="7" height="7" fill="#f0ffff"/><rect x="5" y="7" width="1" height="3" fill="#00f"/><rect x="6" y="8" width="1" height="1" fill="#00f"/><rect x="8" y="6" width="2" height="1" fill="#f00"/><rect x="8" y="8" width="2" height="1" fill="#f00"/><rect x="8" y="10" width="2" height="1" fill="#f00"/><rect x="11" y="5" width="1" height="7" fill="#0a5a8a"/><rect x="12" y="5" width="1" height="2" fill="#000"/><rect x="12" y="7" width="1" height="5" fill="#fff"/><rect x="13" y="5" width="1" height="7" fill="#0a5a8a"/><rect x="3" y="12" width="11" height="1" fill="#0a5a8a"/></svg>
<div class="f" style="left:427px;top:393px;width:39px;height:17px;"><span style="left:2.2px;letter-spacing:-0.10px">1</span></div>
<div class="f" style="left:467px;top:393px;width:119px;height:17px;"><span style="left:2.7px;letter-spacing:-0.33px">Müller Michael</span></div>
<svg class="a" style="left:589px;top:395px" width="16" height="16" viewBox="0 0 16 16" shape-rendering="crispEdges"><rect x="0" y="0" width="16" height="16" fill="#6b82a6"/><rect x="0" y="0" width="15" height="15" fill="#c6c6c6"/><rect x="0" y="0" width="15" height="1" fill="#e6e6e6"/><rect x="0" y="1" width="1" height="13" fill="#d6d6d6"/><rect x="1" y="1" width="8" height="1" fill="#0a64a8"/><rect x="8" y="1" width="2" height="1" fill="#000"/><rect x="1" y="1" width="1" height="7" fill="#0a64a8"/><rect x="1" y="8" width="3" height="1" fill="#000"/><rect x="3" y="3" width="11" height="1" fill="#000"/><rect x="3" y="4" width="1" height="8" fill="#000"/><rect x="4" y="4" width="7" height="1" fill="#000"/><rect x="11" y="4" width="3" height="1" fill="#0a5a8a"/><rect x="4" y="5" width="7" height="7" fill="#f0ffff"/><rect x="5" y="7" width="1" height="3" fill="#00f"/><rect x="6" y="8" width="1" height="1" fill="#00f"/><rect x="8" y="6" width="2" height="1" fill="#f00"/><rect x="8" y="8" width="2" height="1" fill="#f00"/><rect x="8" y="10" width="2" height="1" fill="#f00"/><rect x="11" y="5" width="1" height="7" fill="#0a5a8a"/><rect x="12" y="5" width="1" height="2" fill="#000"/><rect x="12" y="7" width="1" height="5" fill="#fff"/><rect x="13" y="5" width="1" height="7" fill="#0a5a8a"/><rect x="3" y="12" width="11" height="1" fill="#0a5a8a"/></svg>
<div class="f" style="left:607px;top:393px;width:53px;height:17px;"><span style="left:12.8px;letter-spacing:0.02px">10,00%</span></div>
<div class="f" style="left:661px;top:393px;width:52px;height:17px;"><span style="left:22.6px;letter-spacing:-0.35px">28,00</span></div>
<div class="l" style="left:716.6px;top:397px;letter-spacing:-1.20px">EUR</div>
<div class="f" style="left:745px;top:393px;width:45px;height:17px;"><span style="left:36.3px;letter-spacing:-0.10px">1</span></div>
<div class="f" style="left:791px;top:393px;width:53px;height:17px;"><span style="left:17.9px;letter-spacing:-0.48px">480,00</span></div>
<div class="f" style="left:845px;top:393px;width:52px;height:17px;"><span style="left:22.5px;letter-spacing:-0.42px">10,00</span></div>
<div class="l" style="left:932.8px;top:397px;letter-spacing:0.00px">2</div>
<svg class="a" style="left:953px;top:396px" width="12" height="12" viewBox="0 0 12 12"><rect x="0" y="0" width="12" height="12" fill="#fff"/><rect x="0" y="0" width="10" height="1" fill="#1c2b48"/><rect x="0" y="0" width="1" height="10" fill="#1c2b48"/><path d="M2.4 6.1 L5.2 8.6 L10.8 2.5" fill="none" stroke="#1c2b48" stroke-width="2.5"/></svg>
<div class="f" style="left:293px;top:411px;width:32px;height:18px;"><span style="left:1.2px;letter-spacing:-0.10px">12</span></div>
<div class="f" style="left:326px;top:411px;width:78px;height:18px;"><span style="left:2.6px;letter-spacing:-1.00px">LF</span></div>
<svg class="a" style="left:409px;top:413px" width="16" height="16" viewBox="0 0 16 16" shape-rendering="crispEdges"><rect x="0" y="0" width="16" height="16" fill="#6b82a6"/><rect x="0" y="0" width="15" height="15" fill="#c6c6c6"/><rect x="0" y="0" width="15" height="1" fill="#e6e6e6"/><rect x="0" y="1" width="1" height="13" fill="#d6d6d6"/><rect x="1" y="1" width="8" height="1" fill="#0a64a8"/><rect x="8" y="1" width="2" height="1" fill="#000"/><rect x="1" y="1" width="1" height="7" fill="#0a64a8"/><rect x="1" y="8" width="3" height="1" fill="#000"/><rect x="3" y="3" width="11" height="1" fill="#000"/><rect x="3" y="4" width="1" height="8" fill="#000"/><rect x="4" y="4" width="7" height="1" fill="#000"/><rect x="11" y="4" width="3" height="1" fill="#0a5a8a"/><rect x="4" y="5" width="7" height="7" fill="#f0ffff"/><rect x="5" y="7" width="1" height="3" fill="#00f"/><rect x="6" y="8" width="1" height="1" fill="#00f"/><rect x="8" y="6" width="2" height="1" fill="#f00"/><rect x="8" y="8" width="2" height="1" fill="#f00"/><rect x="8" y="10" width="2" height="1" fill="#f00"/><rect x="11" y="5" width="1" height="7" fill="#0a5a8a"/><rect x="12" y="5" width="1" height="2" fill="#000"/><rect x="12" y="7" width="1" height="5" fill="#fff"/><rect x="13" y="5" width="1" height="7" fill="#0a5a8a"/><rect x="3" y="12" width="11" height="1" fill="#0a5a8a"/></svg>
<div class="f" style="left:427px;top:411px;width:39px;height:18px;"><span style="left:2.2px;letter-spacing:-0.10px">1</span></div>
<div class="f" style="left:467px;top:411px;width:119px;height:18px;"><span style="left:2.7px;letter-spacing:-0.33px">Müller Michael</span></div>
<svg class="a" style="left:589px;top:413px" width="16" height="16" viewBox="0 0 16 16" shape-rendering="crispEdges"><rect x="0" y="0" width="16" height="16" fill="#6b82a6"/><rect x="0" y="0" width="15" height="15" fill="#c6c6c6"/><rect x="0" y="0" width="15" height="1" fill="#e6e6e6"/><rect x="0" y="1" width="1" height="13" fill="#d6d6d6"/><rect x="1" y="1" width="8" height="1" fill="#0a64a8"/><rect x="8" y="1" width="2" height="1" fill="#000"/><rect x="1" y="1" width="1" height="7" fill="#0a64a8"/><rect x="1" y="8" width="3" height="1" fill="#000"/><rect x="3" y="3" width="11" height="1" fill="#000"/><rect x="3" y="4" width="1" height="8" fill="#000"/><rect x="4" y="4" width="7" height="1" fill="#000"/><rect x="11" y="4" width="3" height="1" fill="#0a5a8a"/><rect x="4" y="5" width="7" height="7" fill="#f0ffff"/><rect x="5" y="7" width="1" height="3" fill="#00f"/><rect x="6" y="8" width="1" height="1" fill="#00f"/><rect x="8" y="6" width="2" height="1" fill="#f00"/><rect x="8" y="8" width="2" height="1" fill="#f00"/><rect x="8" y="10" width="2" height="1" fill="#f00"/><rect x="11" y="5" width="1" height="7" fill="#0a5a8a"/><rect x="12" y="5" width="1" height="2" fill="#000"/><rect x="12" y="7" width="1" height="5" fill="#fff"/><rect x="13" y="5" width="1" height="7" fill="#0a5a8a"/><rect x="3" y="12" width="11" height="1" fill="#0a5a8a"/></svg>
<div class="f" style="left:607px;top:411px;width:53px;height:18px;"><span style="left:12.8px;letter-spacing:0.02px">10,00%</span></div>
<div class="f" style="left:661px;top:411px;width:52px;height:18px;"><span style="left:22.6px;letter-spacing:-0.35px">28,00</span></div>
<div class="l" style="left:716.6px;top:415px;letter-spacing:-1.20px">EUR</div>
<div class="f" style="left:745px;top:411px;width:45px;height:18px;"><span style="left:36.3px;letter-spacing:-0.10px">2</span></div>
<div class="f" style="left:791px;top:411px;width:53px;height:18px;"><span style="left:24.1px;letter-spacing:-0.65px">80,00</span></div>
<div class="f" style="left:845px;top:411px;width:52px;height:18px;"><span style="left:22.5px;letter-spacing:-0.42px">10,00</span></div>
<div class="l" style="left:933.9px;top:415px;letter-spacing:-1.10px">1</div>
<svg class="a" style="left:953px;top:414px" width="12" height="12" viewBox="0 0 12 12"><rect x="0" y="0" width="12" height="12" fill="#fff"/><rect x="0" y="0" width="10" height="1" fill="#1c2b48"/><rect x="0" y="0" width="1" height="10" fill="#1c2b48"/><path d="M2.4 6.1 L5.2 8.6 L10.8 2.5" fill="none" stroke="#1c2b48" stroke-width="2.5"/></svg>
<div class="f" style="left:293px;top:430px;width:32px;height:18px;"><span style="left:1.2px;letter-spacing:-0.10px">13</span></div>
<div class="f" style="left:326px;top:430px;width:78px;height:18px;"><span style="left:2.6px;letter-spacing:-1.30px">RA</span></div>
<svg class="a" style="left:409px;top:432px" width="16" height="16" viewBox="0 0 16 16" shape-rendering="crispEdges"><rect x="0" y="0" width="16" height="16" fill="#6b82a6"/><rect x="0" y="0" width="15" height="15" fill="#c6c6c6"/><rect x="0" y="0" width="15" height="1" fill="#e6e6e6"/><rect x="0" y="1" width="1" height="13" fill="#d6d6d6"/><rect x="1" y="1" width="8" height="1" fill="#0a64a8"/><rect x="8" y="1" width="2" height="1" fill="#000"/><rect x="1" y="1" width="1" height="7" fill="#0a64a8"/><rect x="1" y="8" width="3" height="1" fill="#000"/><rect x="3" y="3" width="11" height="1" fill="#000"/><rect x="3" y="4" width="1" height="8" fill="#000"/><rect x="4" y="4" width="7" height="1" fill="#000"/><rect x="11" y="4" width="3" height="1" fill="#0a5a8a"/><rect x="4" y="5" width="7" height="7" fill="#f0ffff"/><rect x="5" y="7" width="1" height="3" fill="#00f"/><rect x="6" y="8" width="1" height="1" fill="#00f"/><rect x="8" y="6" width="2" height="1" fill="#f00"/><rect x="8" y="8" width="2" height="1" fill="#f00"/><rect x="8" y="10" width="2" height="1" fill="#f00"/><rect x="11" y="5" width="1" height="7" fill="#0a5a8a"/><rect x="12" y="5" width="1" height="2" fill="#000"/><rect x="12" y="7" width="1" height="5" fill="#fff"/><rect x="13" y="5" width="1" height="7" fill="#0a5a8a"/><rect x="3" y="12" width="11" height="1" fill="#0a5a8a"/></svg>
<div class="f" style="left:427px;top:430px;width:39px;height:18px;"><span style="left:2.2px;letter-spacing:-0.10px">1</span></div>
<div class="f" style="left:467px;top:430px;width:119px;height:18px;"><span style="left:2.7px;letter-spacing:-0.33px">Müller Michael</span></div>
<svg class="a" style="left:589px;top:432px" width="16" height="16" viewBox="0 0 16 16" shape-rendering="crispEdges"><rect x="0" y="0" width="16" height="16" fill="#6b82a6"/><rect x="0" y="0" width="15" height="15" fill="#c6c6c6"/><rect x="0" y="0" width="15" height="1" fill="#e6e6e6"/><rect x="0" y="1" width="1" height="13" fill="#d6d6d6"/><rect x="1" y="1" width="8" height="1" fill="#0a64a8"/><rect x="8" y="1" width="2" height="1" fill="#000"/><rect x="1" y="1" width="1" height="7" fill="#0a64a8"/><rect x="1" y="8" width="3" height="1" fill="#000"/><rect x="3" y="3" width="11" height="1" fill="#000"/><rect x="3" y="4" width="1" height="8" fill="#000"/><rect x="4" y="4" width="7" height="1" fill="#000"/><rect x="11" y="4" width="3" height="1" fill="#0a5a8a"/><rect x="4" y="5" width="7" height="7" fill="#f0ffff"/><rect x="5" y="7" width="1" height="3" fill="#00f"/><rect x="6" y="8" width="1" height="1" fill="#00f"/><rect x="8" y="6" width="2" height="1" fill="#f00"/><rect x="8" y="8" width="2" height="1" fill="#f00"/><rect x="8" y="10" width="2" height="1" fill="#f00"/><rect x="11" y="5" width="1" height="7" fill="#0a5a8a"/><rect x="12" y="5" width="1" height="2" fill="#000"/><rect x="12" y="7" width="1" height="5" fill="#fff"/><rect x="13" y="5" width="1" height="7" fill="#0a5a8a"/><rect x="3" y="12" width="11" height="1" fill="#0a5a8a"/></svg>
<div class="f" style="left:607px;top:430px;width:53px;height:18px;"><span style="left:12.8px;letter-spacing:0.02px">10,00%</span></div>
<div class="f" style="left:661px;top:430px;width:52px;height:18px;"><span style="left:22.6px;letter-spacing:-0.35px">28,00</span></div>
<div class="l" style="left:716.6px;top:434px;letter-spacing:-1.20px">EUR</div>
<div class="f" style="left:745px;top:430px;width:45px;height:18px;"><span style="left:36.3px;letter-spacing:-0.10px">2</span></div>
<div class="f" style="left:791px;top:430px;width:53px;height:18px;"><span style="left:24.1px;letter-spacing:-0.65px">80,00</span></div>
<div class="f" style="left:845px;top:430px;width:52px;height:18px;"><span style="left:22.5px;letter-spacing:-0.42px">10,00</span></div>
<div class="l" style="left:933.9px;top:434px;letter-spacing:-1.10px">1</div>
<svg class="a" style="left:953px;top:433px" width="12" height="12" viewBox="0 0 12 12"><rect x="0" y="0" width="12" height="12" fill="#fff"/><rect x="0" y="0" width="10" height="1" fill="#1c2b48"/><rect x="0" y="0" width="1" height="10" fill="#1c2b48"/><path d="M2.4 6.1 L5.2 8.6 L10.8 2.5" fill="none" stroke="#1c2b48" stroke-width="2.5"/></svg>
<div class="f" style="left:293px;top:449px;width:32px;height:17px;"><span style="left:1.2px;letter-spacing:-0.10px">103</span></div>
<div class="f" style="left:326px;top:449px;width:78px;height:17px;"><span style="left:2.6px;letter-spacing:-0.55px">VPK</span></div>
<svg class="a" style="left:409px;top:451px" width="16" height="16" viewBox="0 0 16 16" shape-rendering="crispEdges"><rect x="0" y="0" width="16" height="16" fill="#6b82a6"/><rect x="0" y="0" width="15" height="15" fill="#c6c6c6"/><rect x="0" y="0" width="15" height="1" fill="#e6e6e6"/><rect x="0" y="1" width="1" height="13" fill="#d6d6d6"/><rect x="1" y="1" width="8" height="1" fill="#0a64a8"/><rect x="8" y="1" width="2" height="1" fill="#000"/><rect x="1" y="1" width="1" height="7" fill="#0a64a8"/><rect x="1" y="8" width="3" height="1" fill="#000"/><rect x="3" y="3" width="11" height="1" fill="#000"/><rect x="3" y="4" width="1" height="8" fill="#000"/><rect x="4" y="4" width="7" height="1" fill="#000"/><rect x="11" y="4" width="3" height="1" fill="#0a5a8a"/><rect x="4" y="5" width="7" height="7" fill="#f0ffff"/><rect x="5" y="7" width="1" height="3" fill="#00f"/><rect x="6" y="8" width="1" height="1" fill="#00f"/><rect x="8" y="6" width="2" height="1" fill="#f00"/><rect x="8" y="8" width="2" height="1" fill="#f00"/><rect x="8" y="10" width="2" height="1" fill="#f00"/><rect x="11" y="5" width="1" height="7" fill="#0a5a8a"/><rect x="12" y="5" width="1" height="2" fill="#000"/><rect x="12" y="7" width="1" height="5" fill="#fff"/><rect x="13" y="5" width="1" height="7" fill="#0a5a8a"/><rect x="3" y="12" width="11" height="1" fill="#0a5a8a"/></svg>
<div class="f" style="left:427px;top:449px;width:39px;height:17px;"><span style="left:2.2px;letter-spacing:-0.10px">1</span></div>
<div class="f" style="left:467px;top:449px;width:119px;height:17px;"><span style="left:2.7px;letter-spacing:-0.33px">Müller Michael</span></div>
<svg class="a" style="left:589px;top:451px" width="16" height="16" viewBox="0 0 16 16" shape-rendering="crispEdges"><rect x="0" y="0" width="16" height="16" fill="#6b82a6"/><rect x="0" y="0" width="15" height="15" fill="#c6c6c6"/><rect x="0" y="0" width="15" height="1" fill="#e6e6e6"/><rect x="0" y="1" width="1" height="13" fill="#d6d6d6"/><rect x="1" y="1" width="8" height="1" fill="#0a64a8"/><rect x="8" y="1" width="2" height="1" fill="#000"/><rect x="1" y="1" width="1" height="7" fill="#0a64a8"/><rect x="1" y="8" width="3" height="1" fill="#000"/><rect x="3" y="3" width="11" height="1" fill="#000"/><rect x="3" y="4" width="1" height="8" fill="#000"/><rect x="4" y="4" width="7" height="1" fill="#000"/><rect x="11" y="4" width="3" height="1" fill="#0a5a8a"/><rect x="4" y="5" width="7" height="7" fill="#f0ffff"/><rect x="5" y="7" width="1" height="3" fill="#00f"/><rect x="6" y="8" width="1" height="1" fill="#00f"/><rect x="8" y="6" width="2" height="1" fill="#f00"/><rect x="8" y="8" width="2" height="1" fill="#f00"/><rect x="8" y="10" width="2" height="1" fill="#f00"/><rect x="11" y="5" width="1" height="7" fill="#0a5a8a"/><rect x="12" y="5" width="1" height="2" fill="#000"/><rect x="12" y="7" width="1" height="5" fill="#fff"/><rect x="13" y="5" width="1" height="7" fill="#0a5a8a"/><rect x="3" y="12" width="11" height="1" fill="#0a5a8a"/></svg>
<div class="f" style="left:607px;top:449px;width:53px;height:17px;"><span style="left:12.8px;letter-spacing:0.02px">10,00%</span></div>
<div class="f" style="left:661px;top:449px;width:52px;height:17px;"><span style="left:22.6px;letter-spacing:-0.35px">28,00</span></div>
<div class="l" style="left:716.6px;top:453px;letter-spacing:-1.20px">EUR</div>
<div class="f" style="left:745px;top:449px;width:45px;height:17px;"><span style="left:36.3px;letter-spacing:-0.10px">2</span></div>
<div class="f" style="left:791px;top:449px;width:53px;height:17px;"><span style="left:17.9px;letter-spacing:-0.48px">960,00</span></div>
<div class="f" style="left:845px;top:449px;width:52px;height:17px;"><span style="left:22.5px;letter-spacing:-0.42px">10,00</span></div>
<div class="l" style="left:933.9px;top:453px;letter-spacing:-1.10px">1</div>
<svg class="a" style="left:953px;top:452px" width="12" height="12" viewBox="0 0 12 12"><rect x="0" y="0" width="12" height="12" fill="#fff"/><rect x="0" y="0" width="10" height="1" fill="#1c2b48"/><rect x="0" y="0" width="1" height="10" fill="#1c2b48"/><path d="M2.4 6.1 L5.2 8.6 L10.8 2.5" fill="none" stroke="#1c2b48" stroke-width="2.5"/></svg>
<div class="f" style="left:293px;top:467px;width:32px;height:18px;"><span style="left:2.2px;letter-spacing:-0.10px">35</span></div>
<div class="f" style="left:326px;top:467px;width:78px;height:18px;"><span style="left:2.6px;letter-spacing:-0.97px">SCHA</span></div>
<svg class="a" style="left:409px;top:469px" width="16" height="16" viewBox="0 0 16 16" shape-rendering="crispEdges"><rect x="0" y="0" width="16" height="16" fill="#6b82a6"/><rect x="0" y="0" width="15" height="15" fill="#c6c6c6"/><rect x="0" y="0" width="15" height="1" fill="#e6e6e6"/><rect x="0" y="1" width="1" height="13" fill="#d6d6d6"/><rect x="1" y="1" width="8" height="1" fill="#0a64a8"/><rect x="8" y="1" width="2" height="1" fill="#000"/><rect x="1" y="1" width="1" height="7" fill="#0a64a8"/><rect x="1" y="8" width="3" height="1" fill="#000"/><rect x="3" y="3" width="11" height="1" fill="#000"/><rect x="3" y="4" width="1" height="8" fill="#000"/><rect x="4" y="4" width="7" height="1" fill="#000"/><rect x="11" y="4" width="3" height="1" fill="#0a5a8a"/><rect x="4" y="5" width="7" height="7" fill="#f0ffff"/><rect x="5" y="7" width="1" height="3" fill="#00f"/><rect x="6" y="8" width="1" height="1" fill="#00f"/><rect x="8" y="6" width="2" height="1" fill="#f00"/><rect x="8" y="8" width="2" height="1" fill="#f00"/><rect x="8" y="10" width="2" height="1" fill="#f00"/><rect x="11" y="5" width="1" height="7" fill="#0a5a8a"/><rect x="12" y="5" width="1" height="2" fill="#000"/><rect x="12" y="7" width="1" height="5" fill="#fff"/><rect x="13" y="5" width="1" height="7" fill="#0a5a8a"/><rect x="3" y="12" width="11" height="1" fill="#0a5a8a"/></svg>
<div class="f" style="left:427px;top:467px;width:39px;height:18px;"><span style="left:2.2px;letter-spacing:-0.10px">1</span></div>
<div class="f" style="left:467px;top:467px;width:119px;height:18px;"><span style="left:2.7px;letter-spacing:-0.33px">Müller Michael</span></div>
<svg class="a" style="left:589px;top:469px" width="16" height="16" viewBox="0 0 16 16" shape-rendering="crispEdges"><rect x="0" y="0" width="16" height="16" fill="#6b82a6"/><rect x="0" y="0" width="15" height="15" fill="#c6c6c6"/><rect x="0" y="0" width="15" height="1" fill="#e6e6e6"/><rect x="0" y="1" width="1" height="13" fill="#d6d6d6"/><rect x="1" y="1" width="8" height="1" fill="#0a64a8"/><rect x="8" y="1" width="2" height="1" fill="#000"/><rect x="1" y="1" width="1" height="7" fill="#0a64a8"/><rect x="1" y="8" width="3" height="1" fill="#000"/><rect x="3" y="3" width="11" height="1" fill="#000"/><rect x="3" y="4" width="1" height="8" fill="#000"/><rect x="4" y="4" width="7" height="1" fill="#000"/><rect x="11" y="4" width="3" height="1" fill="#0a5a8a"/><rect x="4" y="5" width="7" height="7" fill="#f0ffff"/><rect x="5" y="7" width="1" height="3" fill="#00f"/><rect x="6" y="8" width="1" height="1" fill="#00f"/><rect x="8" y="6" width="2" height="1" fill="#f00"/><rect x="8" y="8" width="2" height="1" fill="#f00"/><rect x="8" y="10" width="2" height="1" fill="#f00"/><rect x="11" y="5" width="1" height="7" fill="#0a5a8a"/><rect x="12" y="5" width="1" height="2" fill="#000"/><rect x="12" y="7" width="1" height="5" fill="#fff"/><rect x="13" y="5" width="1" height="7" fill="#0a5a8a"/><rect x="3" y="12" width="11" height="1" fill="#0a5a8a"/></svg>
<div class="f" style="left:607px;top:467px;width:53px;height:18px;"><span style="left:12.8px;letter-spacing:0.02px">10,00%</span></div>
<div class="f" style="left:661px;top:467px;width:52px;height:18px;"><span style="left:22.6px;letter-spacing:-0.35px">28,00</span></div>
<div class="l" style="left:716.6px;top:471px;letter-spacing:-1.20px">EUR</div>
<div class="f" style="left:745px;top:467px;width:45px;height:18px;"><span style="left:36.3px;letter-spacing:-0.10px">1</span></div>
<div class="f" style="left:791px;top:467px;width:53px;height:18px;"><span style="left:17.9px;letter-spacing:-0.48px">480,00</span></div>
<div class="f" style="left:845px;top:467px;width:52px;height:18px;"><span style="left:22.5px;letter-spacing:-0.42px">10,00</span></div>
<div class="l" style="left:933.9px;top:471px;letter-spacing:-1.10px">1</div>
<svg class="a" style="left:953px;top:470px" width="12" height="12" viewBox="0 0 12 12"><rect x="0" y="0" width="12" height="12" fill="#fff"/><rect x="0" y="0" width="10" height="1" fill="#1c2b48"/><rect x="0" y="0" width="1" height="10" fill="#1c2b48"/><path d="M2.4 6.1 L5.2 8.6 L10.8 2.5" fill="none" stroke="#1c2b48" stroke-width="2.5"/></svg>
<div class="f" style="left:293px;top:486px;width:32px;height:18px;"><span style="left:2.2px;letter-spacing:-0.10px">20</span></div>
<div class="f" style="left:326px;top:486px;width:78px;height:18px;"><span style="left:2.6px;letter-spacing:-0.70px">ZUSCH</span></div>
<svg class="a" style="left:409px;top:488px" width="16" height="16" viewBox="0 0 16 16" shape-rendering="crispEdges"><rect x="0" y="0" width="16" height="16" fill="#6b82a6"/><rect x="0" y="0" width="15" height="15" fill="#c6c6c6"/><rect x="0" y="0" width="15" height="1" fill="#e6e6e6"/><rect x="0" y="1" width="1" height="13" fill="#d6d6d6"/><rect x="1" y="1" width="8" height="1" fill="#0a64a8"/><rect x="8" y="1" width="2" height="1" fill="#000"/><rect x="1" y="1" width="1" height="7" fill="#0a64a8"/><rect x="1" y="8" width="3" height="1" fill="#000"/><rect x="3" y="3" width="11" height="1" fill="#000"/><rect x="3" y="4" width="1" height="8" fill="#000"/><rect x="4" y="4" width="7" height="1" fill="#000"/><rect x="11" y="4" width="3" height="1" fill="#0a5a8a"/><rect x="4" y="5" width="7" height="7" fill="#f0ffff"/><rect x="5" y="7" width="1" height="3" fill="#00f"/><rect x="6" y="8" width="1" height="1" fill="#00f"/><rect x="8" y="6" width="2" height="1" fill="#f00"/><rect x="8" y="8" width="2" height="1" fill="#f00"/><rect x="8" y="10" width="2" height="1" fill="#f00"/><rect x="11" y="5" width="1" height="7" fill="#0a5a8a"/><rect x="12" y="5" width="1" height="2" fill="#000"/><rect x="12" y="7" width="1" height="5" fill="#fff"/><rect x="13" y="5" width="1" height="7" fill="#0a5a8a"/><rect x="3" y="12" width="11" height="1" fill="#0a5a8a"/></svg>
<div class="f" style="left:427px;top:486px;width:39px;height:18px;"><span style="left:2.2px;letter-spacing:-0.10px">1</span></div>
<div class="f" style="left:467px;top:486px;width:119px;height:18px;"><span style="left:2.7px;letter-spacing:-0.33px">Müller Michael</span></div>
<svg class="a" style="left:589px;top:488px" width="16" height="16" viewBox="0 0 16 16" shape-rendering="crispEdges"><rect x="0" y="0" width="16" height="16" fill="#6b82a6"/><rect x="0" y="0" width="15" height="15" fill="#c6c6c6"/><rect x="0" y="0" width="15" height="1" fill="#e6e6e6"/><rect x="0" y="1" width="1" height="13" fill="#d6d6d6"/><rect x="1" y="1" width="8" height="1" fill="#0a64a8"/><rect x="8" y="1" width="2" height="1" fill="#000"/><rect x="1" y="1" width="1" height="7" fill="#0a64a8"/><rect x="1" y="8" width="3" height="1" fill="#000"/><rect x="3" y="3" width="11" height="1" fill="#000"/><rect x="3" y="4" width="1" height="8" fill="#000"/><rect x="4" y="4" width="7" height="1" fill="#000"/><rect x="11" y="4" width="3" height="1" fill="#0a5a8a"/><rect x="4" y="5" width="7" height="7" fill="#f0ffff"/><rect x="5" y="7" width="1" height="3" fill="#00f"/><rect x="6" y="8" width="1" height="1" fill="#00f"/><rect x="8" y="6" width="2" height="1" fill="#f00"/><rect x="8" y="8" width="2" height="1" fill="#f00"/><rect x="8" y="10" width="2" height="1" fill="#f00"/><rect x="11" y="5" width="1" height="7" fill="#0a5a8a"/><rect x="12" y="5" width="1" height="2" fill="#000"/><rect x="12" y="7" width="1" height="5" fill="#fff"/><rect x="13" y="5" width="1" height="7" fill="#0a5a8a"/><rect x="3" y="12" width="11" height="1" fill="#0a5a8a"/></svg>
<div class="f" style="left:607px;top:486px;width:53px;height:18px;"><span style="left:12.8px;letter-spacing:0.02px">10,00%</span></div>
<div class="f" style="left:661px;top:486px;width:52px;height:18px;"><span style="left:22.6px;letter-spacing:-0.35px">28,00</span></div>
<div class="l" style="left:716.6px;top:490px;letter-spacing:-1.20px">EUR</div>
<div class="f" style="left:745px;top:486px;width:45px;height:18px;"><span style="left:36.3px;letter-spacing:-0.10px">1</span></div>
<div class="f" style="left:791px;top:486px;width:53px;height:18px;"><span style="left:17.9px;letter-spacing:-0.48px">480,00</span></div>
<div class="f" style="left:845px;top:486px;width:52px;height:18px;"><span style="left:22.5px;letter-spacing:-0.42px">10,00</span></div>
<div class="l" style="left:932.8px;top:490px;letter-spacing:0.00px">2</div>
<svg class="a" style="left:953px;top:489px" width="12" height="12" viewBox="0 0 12 12"><rect x="0" y="0" width="12" height="12" fill="#fff"/><rect x="0" y="0" width="10" height="1" fill="#1c2b48"/><rect x="0" y="0" width="1" height="10" fill="#1c2b48"/><path d="M2.4 6.1 L5.2 8.6 L10.8 2.5" fill="none" stroke="#1c2b48" stroke-width="2.5"/></svg>
<svg class="a" style="left:970px;top:355px" width="15" height="150" viewBox="0 0 15 150"><clipPath id="sbc2"><rect x="0" y="0" width="15" height="150" rx="7.5" ry="7.5"/></clipPath><clipPath id="sbc2e"><rect x="0" y="0" width="15" height="15"/><rect x="0" y="135" width="15" height="15"/></clipPath><g clip-path="url(#sbc2)"><rect x="0" y="0" width="15" height="150" fill="#cdcdcd"/><rect x="0" y="76" width="15" height="59" fill="#adadad"/><rect x="0" y="75" width="15" height="1" fill="#7589ab"/><rect x="1" y="16" width="1" height="59" fill="#f6f6f6"/><rect x="1" y="135" width="13" height="1" fill="#fff"/><rect x="0" y="14" width="15" height="1" fill="#5f779e"/><rect x="1" y="15" width="13" height="1" fill="#fff"/></g><rect x="0.5" y="0.5" width="14" height="149" rx="7" ry="7" fill="none" stroke="#a6a6a6"/><g clip-path="url(#sbc2e)"><rect x="1.5" y="1.5" width="12" height="147" rx="6" ry="6" fill="none" stroke="#f4f4f4"/><rect x="0.5" y="0.5" width="14" height="149" rx="7" ry="7" fill="none" stroke="#7e92b3"/></g><path d="M4 10 L7.6 6 L11.2 10 Z" fill="#506a92"/><path d="M4 140 L7.6 144 L11.2 140 Z" fill="#506a92"/><rect x="10" y="35" width="1.4" height="1.4" fill="#fff"/><rect x="9" y="36" width="1" height="1" fill="#9aa6ba"/><rect x="5" y="39" width="1.4" height="1.4" fill="#fff"/><rect x="4" y="40" width="1" height="1" fill="#9aa6ba"/><rect x="10" y="43" width="1.4" height="1.4" fill="#fff"/><rect x="9" y="44" width="1" height="1" fill="#9aa6ba"/><rect x="5" y="47" width="1.4" height="1.4" fill="#fff"/><rect x="4" y="48" width="1" height="1" fill="#9aa6ba"/><rect x="10" y="51" width="1.4" height="1.4" fill="#fff"/><rect x="9" y="52" width="1" height="1" fill="#9aa6ba"/></svg>
<div class="rb" style="left:460px;top:521px;width:363px;height:57px"></div>
<div class="l" style="left:493.2px;top:533px;letter-spacing:0.09px">Erfassung</div>
<div class="f ro" style="left:550px;top:531px;width:119px;height:18px;"><span style="left:2.5px;letter-spacing:-0.17px">07.01.2019 12:31</span></div>
<div class="f ro" style="left:670px;top:531px;width:132px;height:18px;"><span style="left:2.4px;letter-spacing:-0.90px">REFLEX</span></div>
<div class="l" style="left:495.2px;top:552px;letter-spacing:0.10px">Änderung</div>
<div class="f ro" style="left:550px;top:550px;width:119px;height:18px;"><span style="left:1.5px;letter-spacing:-0.11px">19.05.2023 12:22</span></div>
<div class="f ro" style="left:670px;top:550px;width:132px;height:18px;"><span style="left:2.4px;letter-spacing:-1.30px">BTIT</span></div>
<div class="btn" style="left:888px;top:549px;width:88px;height:19px"><u>S</u>chichten</div>
</body></html>
